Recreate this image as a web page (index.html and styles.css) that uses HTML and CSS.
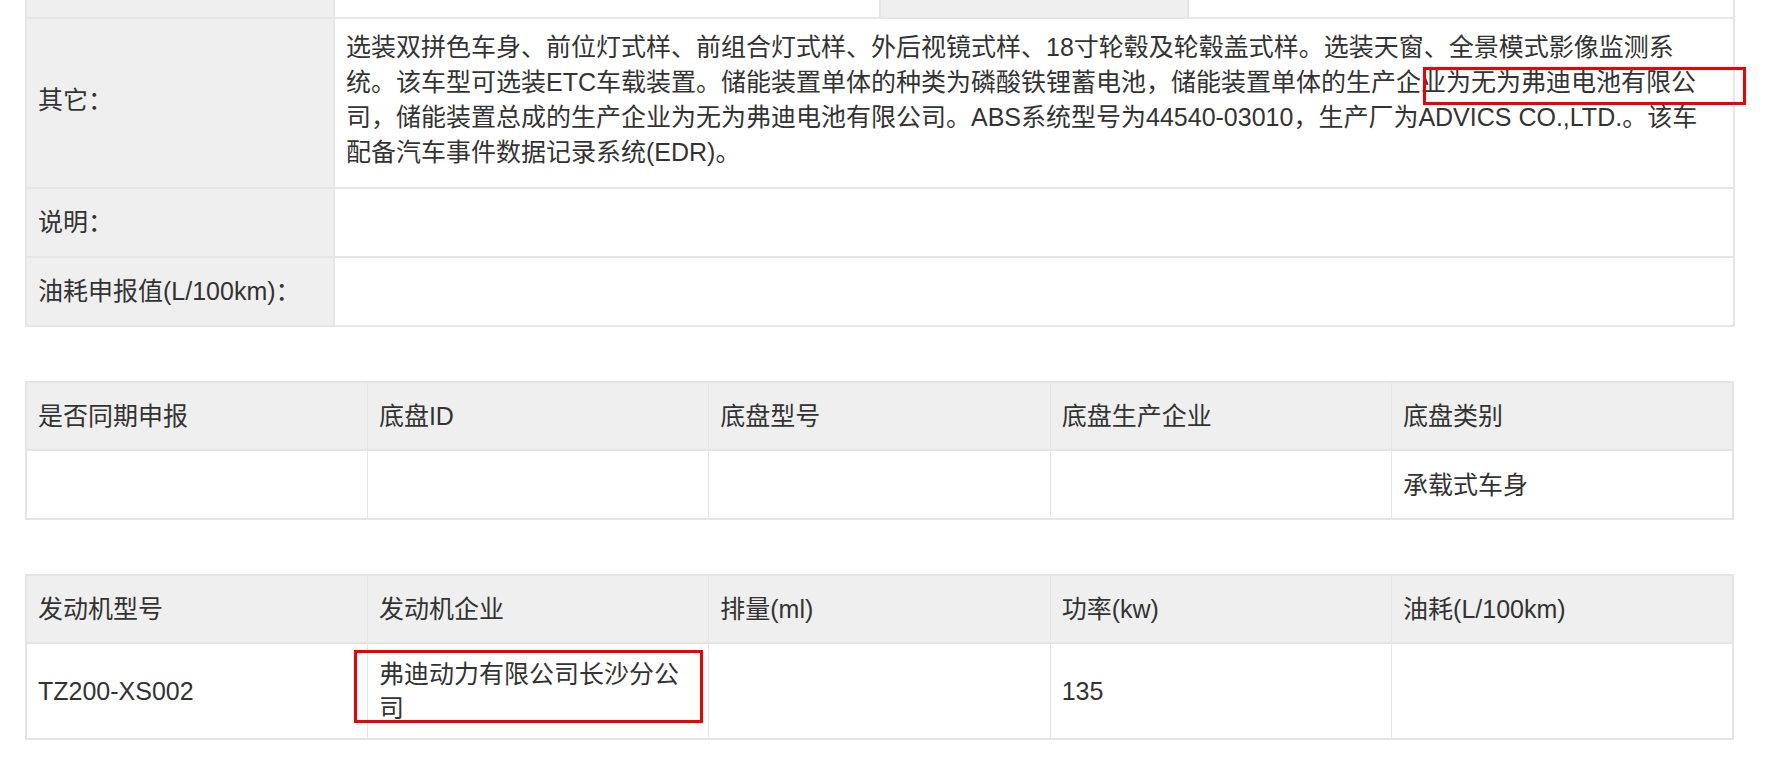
FILE: index.html
```html
<!DOCTYPE html>
<html lang="zh-CN">
<head>
<meta charset="utf-8">
<title>车辆参数</title>
<link rel="stylesheet" href="styles.css">
</head>
<body>
<div class="page">
  <table class="spec spec-main">
    <colgroup>
      <col class="col-label"><col class="col-value"><col class="col-label"><col class="col-value">
    </colgroup>
    <tr class="cut">
      <td class="label"></td><td></td><td class="label"></td><td></td>
    </tr>
    <tr class="long">
      <td class="label">其它：</td>
      <td colspan="3">选装双拼色车身、前位灯式样、前组合灯式样、外后视镜式样、18寸轮毂及轮毂盖式样。选装天窗、全景模式影像监测系统。该车型可选装ETC车载装置。储能装置单体的种类为磷酸铁锂蓄电池，储能装置单体的生产企业为无为弗迪电池有限公司，储能装置总成的生产企业为无为弗迪电池有限公司。ABS系统型号为44540-03010，生产厂为ADVICS CO.,LTD.。该车配备汽车事件数据记录系统(EDR)。</td>
    </tr>
    <tr>
      <td class="label">说明：</td>
      <td colspan="3"></td>
    </tr>
    <tr>
      <td class="label">油耗申报值(L/100km)：</td>
      <td colspan="3"></td>
    </tr>
  </table>

  <table class="spec spec-grid">
    <tr class="head">
      <td>是否同期申报</td><td>底盘ID</td><td>底盘型号</td><td>底盘生产企业</td><td>底盘类别</td>
    </tr>
    <tr class="body">
      <td></td><td></td><td></td><td></td><td>承载式车身</td>
    </tr>
  </table>

  <table class="spec spec-grid">
    <tr class="head">
      <td>发动机型号</td><td>发动机企业</td><td>排量(ml)</td><td>功率(kw)</td><td>油耗(L/100km)</td>
    </tr>
    <tr class="body">
      <td>TZ200-XS002</td><td>弗迪动力有限公司长沙分公司</td><td></td><td>135</td><td></td>
    </tr>
  </table>

  <div class="mark mark-battery"></div>
  <div class="mark mark-engine"></div>
</div>
</body>
</html>
```

FILE: styles.css
```css
html, body {
  margin: 0;
  padding: 0;
  background: #ffffff;
}

.page {
  position: relative;
  width: 1776px;
  height: 764px;
  overflow: hidden;
  padding-left: 25px;
  box-sizing: border-box;
}

.spec {
  width: 1709px;
  border-collapse: collapse;
  table-layout: fixed;
  font-family: "Liberation Sans", "Noto Sans CJK SC", sans-serif;
  font-size: 25px;
  color: #333333;
  border: 2px solid #e4e4e4;
}

.spec td {
  border: 1px solid #e6e6e6;
  padding: 16px 11px;
  line-height: 35px;
  vertical-align: middle;
  text-align: left;
  word-break: break-all;
}

.col-label {
  width: 308px;
}

.col-value {
  width: 546px;
}

.spec-main {
  border-top: none;
}

.spec-main td {
  border-width: 2px;
  border-color: #e6e6e6;
}

.spec-main tr.cut td {
  height: 17px;
  padding: 0 11px;
  border-top: none;
}

.spec-main tr.long td {
  padding-top: 11px;
  padding-bottom: 17px;
}

.spec-main .label {
  background: #efefef;
}

.spec-grid {
  margin-top: 54px;
}

.spec-grid tr.head {
  height: 68px;
}

.spec-grid tr.body {
  height: 69px;
}

.spec-grid td {
  padding: 13px 11px;
  line-height: 34px;
}

.spec-grid tr.head td {
  background: #efefef;
  border-bottom: 2px solid #e4e4e4;
}

.mark {
  position: absolute;
  border: 3px solid #ee0000;
  box-sizing: border-box;
}

.mark-battery {
  left: 1423px;
  top: 67px;
  width: 323px;
  height: 38px;
}

.mark-engine {
  left: 354px;
  top: 650px;
  width: 349px;
  height: 73px;
}
```
